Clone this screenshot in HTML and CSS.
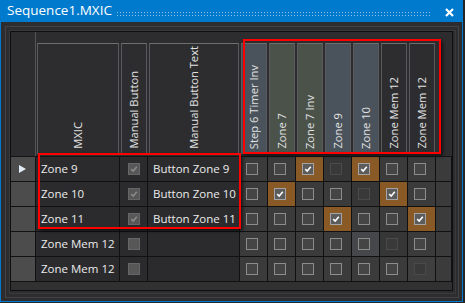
FILE: index.html
```html
<!DOCTYPE html>
<html lang="en">
<head>
    <meta charset="UTF-8">
    <title>Sequence1.MXIC</title>
    <link rel="stylesheet" href="styles.css">
</head>
<body>

<div class="window">
    <div class="titlebar">
        <span class="title">Sequence1.MXIC</span>
        <span class="grip"></span>
        <svg class="close" width="9" height="9" viewBox="0 0 9 9"><path d="M1 1 L8 8 M8 1 L1 8"/></svg>
    </div>

    <div class="body">
        <div class="frame-outer">
            <div class="frame-inner">
                <div class="grid">

                    <!-- column headers -->
                    <div class="head">
                        <div class="corner"></div>
                        <div class="hc"><div class="hbox"><span>MXIC</span></div></div>
                        <div class="hc"><div class="hbox"><span>Manual Button</span></div></div>
                        <div class="hc"><div class="hbox"><span>Manual Button Text</span></div></div>
                        <div class="hc"><div class="hbox blue"><span>Step 6 Timer Inv</span></div></div>
                        <div class="hc"><div class="hbox green"><span>Zone 7</span></div></div>
                        <div class="hc"><div class="hbox green"><span>Zone 7 Inv</span></div></div>
                        <div class="hc"><div class="hbox blue"><span>Zone 9</span></div></div>
                        <div class="hc"><div class="hbox blue"><span>Zone 10</span></div></div>
                        <div class="hc"><div class="hbox"><span>Zone Mem 12</span></div></div>
                        <div class="hc"><div class="hbox"><span>Zone Mem 12</span></div></div>
                        <div class="hc"></div>
                    </div>

                    <!-- rows -->
                    <div class="row">
                        <div class="rh"><svg width="7" height="8" viewBox="0 0 7 8"><polygon points="0,0 7,4 0,8"/></svg></div>
                        <div class="txt">Zone 9</div>
                        <div class="mb"><span class="cb"><svg viewBox="0 0 8 8"><path d="M1.2 4.2 L3.2 6 L6.8 1.8"/></svg></span></div>
                        <div class="txt">Button Zone 9</div>
                        <div class="c"><span class="cb"></span></div>
                        <div class="c"><span class="cb"></span></div>
                        <div class="c hot"><span class="cb"><svg viewBox="0 0 8 8"><path d="M1.2 4.2 L3.2 6 L6.8 1.8"/></svg></span></div>
                        <div class="c dim"><span class="cb"></span></div>
                        <div class="c hot"><span class="cb"><svg viewBox="0 0 8 8"><path d="M1.2 4.2 L3.2 6 L6.8 1.8"/></svg></span></div>
                        <div class="c"><span class="cb"></span></div>
                        <div class="c"><span class="cb"></span></div>
                        <div class="c fill"></div>
                    </div>
                    <div class="row">
                        <div class="rh"></div>
                        <div class="txt">Zone 10</div>
                        <div class="mb"><span class="cb"><svg viewBox="0 0 8 8"><path d="M1.2 4.2 L3.2 6 L6.8 1.8"/></svg></span></div>
                        <div class="txt">Button Zone 10</div>
                        <div class="c"><span class="cb"></span></div>
                        <div class="c hot"><span class="cb"><svg viewBox="0 0 8 8"><path d="M1.2 4.2 L3.2 6 L6.8 1.8"/></svg></span></div>
                        <div class="c"><span class="cb"></span></div>
                        <div class="c"><span class="cb"></span></div>
                        <div class="c dim"><span class="cb"></span></div>
                        <div class="c hot"><span class="cb"><svg viewBox="0 0 8 8"><path d="M1.2 4.2 L3.2 6 L6.8 1.8"/></svg></span></div>
                        <div class="c"><span class="cb"></span></div>
                        <div class="c fill"></div>
                    </div>
                    <div class="row">
                        <div class="rh"></div>
                        <div class="txt">Zone 11</div>
                        <div class="mb"><span class="cb"><svg viewBox="0 0 8 8"><path d="M1.2 4.2 L3.2 6 L6.8 1.8"/></svg></span></div>
                        <div class="txt">Button Zone 11</div>
                        <div class="c"><span class="cb"></span></div>
                        <div class="c"><span class="cb"></span></div>
                        <div class="c"><span class="cb"></span></div>
                        <div class="c hot"><span class="cb"><svg viewBox="0 0 8 8"><path d="M1.2 4.2 L3.2 6 L6.8 1.8"/></svg></span></div>
                        <div class="c"><span class="cb"></span></div>
                        <div class="c"><span class="cb"></span></div>
                        <div class="c hot"><span class="cb"><svg viewBox="0 0 8 8"><path d="M1.2 4.2 L3.2 6 L6.8 1.8"/></svg></span></div>
                        <div class="c fill"></div>
                    </div>
                    <div class="row">
                        <div class="rh"></div>
                        <div class="txt">Zone Mem 12</div>
                        <div class="mb"><span class="cb"></span></div>
                        <div class="txt"></div>
                        <div class="c"><span class="cb"></span></div>
                        <div class="c"><span class="cb"></span></div>
                        <div class="c"><span class="cb"></span></div>
                        <div class="c"><span class="cb"></span></div>
                        <div class="c lit"><span class="cb"></span></div>
                        <div class="c dim"><span class="cb"></span></div>
                        <div class="c"><span class="cb"></span></div>
                        <div class="c fill"></div>
                    </div>
                    <div class="row">
                        <div class="rh"></div>
                        <div class="txt">Zone Mem 12</div>
                        <div class="mb"><span class="cb"></span></div>
                        <div class="txt"></div>
                        <div class="c"><span class="cb"></span></div>
                        <div class="c"><span class="cb"></span></div>
                        <div class="c"><span class="cb"></span></div>
                        <div class="c"><span class="cb"></span></div>
                        <div class="c"><span class="cb"></span></div>
                        <div class="c"><span class="cb"></span></div>
                        <div class="c dim pale"><span class="cb"></span></div>
                        <div class="c fill"></div>
                    </div>

                    <div class="footer"></div>
                </div>
            </div>
        </div>
    </div>

    <!-- annotation boxes -->
    <div class="mark mark-rows"></div>
    <div class="mark mark-cols"></div>
</div>

</body>
</html>
```

FILE: styles.css
```css
body {
    margin: 0;
    background: #252526;
    font-family: "Open Sans", "Liberation Sans", sans-serif;
}
.window {
    position: relative;
    width: 463px;
    height: 302px;
    background: #2d2d30;
}
.titlebar {
    display: flex;
    height: 22px;
    background: #007acc;
    color: white;
}
.title {
    width: 110px;
    padding-left: 7px;
    font-size: 13.5px;
    line-height: 21px;
}
.grip {
    flex: 1;
    height: 4px;
    margin: 12px 14px 0 0;
    background:
        linear-gradient(90deg, #8cc2ea 1px, transparent 1px) 0 0 / 3px 1px repeat-x,
        linear-gradient(90deg, #8cc2ea 1px, transparent 1px) 0 3px / 3px 1px repeat-x;
}
.close {
    margin: 8px 9px 0 0;
}
.close path {
    stroke: white;
    stroke-width: 2.2;
}
.body {
    height: 280px;
    box-sizing: border-box;
    padding: 4px 3px 3px 4px;
    border: 1px solid #007acc;
    border-top: none;
}
.frame-outer {
    border: 1px solid #434346;
    padding: 3px 2px 3px 3px;
}
.frame-inner {
    border: 1px solid #3a3a3c;
    padding: 0 2px 2px 0;
}
.grid {
    border: 1px solid #0e0e0e;
    width: 441px;
}
.head, .row {
    display: grid;
    grid-template-columns: 25px 84px 28px 92px repeat(7, 28px) 16px;
}
.head {
    height: 125px;
    box-sizing: border-box;
    border-bottom: 1px solid #141414;
}
.corner {
    border-right: 1px solid #555;
}
.hc {
    padding: 11px 1px 0 1px;
}
.hbox {
    height: 111px;
    box-sizing: border-box;
    border: 1px solid #5a5a5e;
    border-top-color: #6e6e6e;
    background: #2d2d30;
    display: flex;
    justify-content: center;
    align-items: flex-end;
    padding-bottom: 4px;
    overflow: hidden;
}
.hbox.blue {
    background: #4a535c;
}
.hbox.green {
    background: #4a524a;
}
.hbox span {
    writing-mode: vertical-rl;
    transform: rotate(180deg);
    font-size: 11.2px;
    color: #e2e2e2;
    white-space: nowrap;
    line-height: 14px;
}
.row > div {
    height: 25px;
    box-sizing: border-box;
    border-right: 1px solid #111;
    border-bottom: 1px solid #111;
}
.rh {
    background: #4c4c4c;
    display: flex;
    align-items: center;
    padding-left: 8px;
}
.rh polygon {
    fill: #e2ecf8;
}
.txt {
    background: #2b2b2e;
    color: #ebebeb;
    font-size: 11.5px;
    line-height: 24px;
    padding-left: 5px;
    white-space: nowrap;
}
.mb, .c {
    display: flex;
    align-items: center;
}
.mb {
    background: #2b2b2e;
    justify-content: center;
}
.c {
    background: #3b3b3b;
    padding-left: 6px;
}
.cb {
    width: 12px;
    height: 12px;
    box-sizing: border-box;
    border: 1px solid #8c8c8c;
    background: #454545;
    display: flex;
    align-items: center;
    justify-content: center;
}
.cb svg {
    width: 8px;
    height: 8px;
}
.cb path {
    fill: none;
    stroke: white;
    stroke-width: 1.6;
}
.mb .cb {
    border-color: #666;
    background: #575757;
}
.mb .cb path {
    stroke: #8a8a8a;
}
.c.hot {
    background: #8a5a26;
}
.c.hot .cb {
    border-color: #a4a4a4;
    background: #5c5c5c;
}
.c.dim {
    background: #363636;
}
.c.dim .cb {
    border-color: #4a4a4a;
    background: #393939;
}
.c.lit {
    background: #46474b;
}
.c.pale {
    background: #3f3f3f;
}
.footer {
    height: 8px;
    background: #313131;
}
.mark {
    position: absolute;
    box-sizing: border-box;
    border: 2px solid #f00;
    box-shadow: 2px 2px 3px rgba(0, 0, 0, 0.55);
}
.mark-rows {
    left: 38px;
    top: 153px;
    width: 203px;
    height: 76px;
}
.mark-cols {
    left: 243px;
    top: 39px;
    width: 198px;
    height: 115px;
}
```
